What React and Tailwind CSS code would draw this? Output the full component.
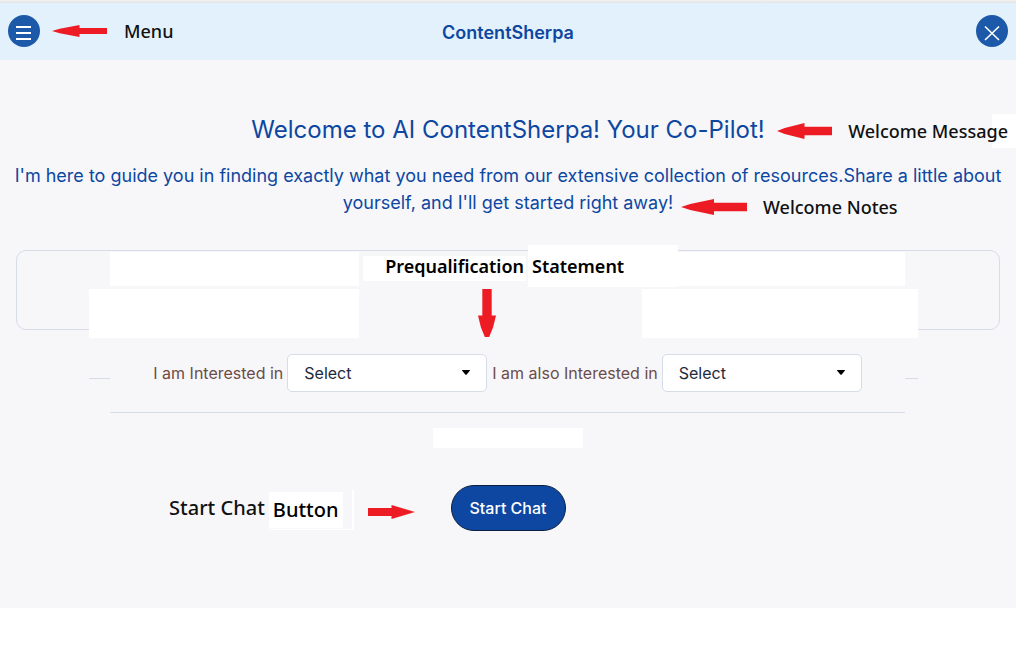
import React, { useState } from "react";

const topics = ["Articles", "Videos", "Webinars", "Case Studies"];

function Arrow({ className, points }) {
  return (
    <svg
      className={className}
      viewBox="0 0 100 100"
      preserveAspectRatio="none"
      fill="#ed1c24"
      aria-hidden="true"
    >
      <polygon points={points} />
    </svg>
  );
}

const LEFT = "0,50 14,32 50,0 50,24 100,24 100,76 50,76 50,100 14,68";
const RIGHT = "100,50 50,0 50,22 0,22 0,78 50,78 50,100";
const DOWN = "24,0 76,0 76,54 100,54 84,78 62,98 38,98 16,78 0,54 24,54";

function TopicSelect({ id, label }) {
  const [value, setValue] = useState("");

  return (
    <div className="flex items-center gap-1">
      <label htmlFor={id} className="text-base text-[#6d4c47]">
        {label}
      </label>
      <div className="relative">
        <select
          id={id}
          value={value}
          onChange={(e) => setValue(e.target.value)}
          className="h-[38px] w-[200px] appearance-none rounded-[5px] border border-[#d6dce8] bg-white px-4 text-base text-[#1e293b]"
        >
          <option value="">Select</option>
          {topics.map((topic) => (
            <option key={topic}>{topic}</option>
          ))}
        </select>
        <svg
          className="pointer-events-none absolute top-4 right-[17px] h-[5px] w-2"
          viewBox="0 0 8 5"
          aria-hidden="true"
        >
          <path d="M0.5 0h7q.7 0 .3.7L4.7 4.5q-.7.7-1.4 0L.2.7Q-.2 0 .5 0z" />
        </svg>
      </div>
    </div>
  );
}

function Header() {
  return (
    <header className="grid h-[57px] grid-cols-[1fr_auto_1fr] items-center bg-[#e3f1fc] px-2 pb-px">
      <div className="flex items-center">
        <button
          aria-label="Open menu"
          className="flex size-8 items-center justify-center rounded-full bg-[#1c5aa9]"
        >
          <svg className="size-8" viewBox="0 0 32 32" stroke="#fff" strokeWidth="2">
            <path d="M8 12h15M8 18h15M8 24h15" />
          </svg>
        </button>
        <Arrow className="ml-3 h-3 w-[55px]" points={LEFT} />
        <span className="ml-[17px] font-['Noto_Sans',sans-serif] text-lg font-medium text-[#111]">
          Menu
        </span>
      </div>
      <h1 className="pt-1 text-lg font-semibold text-[#0d47a1]">
        ContentSherpa
      </h1>
      <button
        aria-label="Close"
        className="flex size-8 items-center justify-center justify-self-end rounded-full bg-[#1c5aa9]"
      >
        <svg className="size-8" viewBox="0 0 32 32" stroke="#fff" strokeWidth="1.6">
          <path d="M9 11.5l14 13.500M23 11.500l-14 13.500" />
        </svg>
      </button>
    </header>
  );
}

function Welcome() {
  return (
    <section className="text-center text-[#0d47a1]">
      <div className="relative">
        <h2 className="text-2xl leading-8">
          Welcome to AI ContentSherpa! Your Co-Pilot!
        </h2>
        <div className="absolute top-0 right-0 flex h-[34px] items-center bg-[linear-gradient(to_left,#fff_24px,transparent_24px)] pr-2">
          <Arrow className="h-4 w-[55px]" points={LEFT} />
          <span className="ml-4 font-['Noto_Sans',sans-serif] text-lg font-medium text-[#111]">
            Welcome Message
          </span>
        </div>
      </div>
      <div className="relative mt-4 px-3">
        <p className="text-lg leading-[27px]">
          I'm here to guide you in finding exactly what you need from our
          extensive collection of resources.Share a little about yourself, and
          I'll get started right away!
        </p>
        <div className="absolute -bottom-0.5 left-[681px] flex h-[22px] items-center">
          <Arrow className="h-4 w-[66px]" points={LEFT} />
          <span className="ml-4 font-['Noto_Sans',sans-serif] text-lg font-medium text-[#111]">
            Welcome Notes
          </span>
        </div>
      </div>
    </section>
  );
}

function Statement() {
  return (
    <section className="relative mx-4 mt-[34px] h-20 rounded-[10px] border border-[#d6dce8]">
      <div className="absolute top-[38px] right-[81px] left-[72px] h-[49px] bg-[#f7f7fa]" />
      <div className="absolute top-px left-[93px] h-[34px] w-[249px] bg-white" />
      <div className="absolute top-[38px] left-[72px] h-[49px] w-[270px] bg-white" />
      <div className="absolute top-px right-[94px] h-[34px] w-[228px] bg-white" />
      <div className="absolute top-[38px] right-[81px] h-[49px] w-[276px] bg-white" />
      <div className="absolute -top-1.5 left-[346px] flex items-center gap-0.5 font-['Noto_Sans',sans-serif] text-lg font-semibold text-black">
        <span className="mt-1 flex h-[25px] w-[163px] items-center justify-end bg-white pr-0.5 pb-1">
          Prequalification
        </span>
        <span className="flex h-[42px] w-[150px] items-center bg-white pl-1">
          Statement
        </span>
      </div>
      <Arrow
        className="absolute top-[38px] left-[461px] h-[49px] w-[18px]"
        points={DOWN}
      />
    </section>
  );
}

function App() {
  return (
    <div className="bg-white font-['Inter',sans-serif]">
      <div className="h-[3px] bg-gradient-to-b from-[#f1f1f1] to-[#e4e4e4]" />
      <Header />
      <main className="bg-[#f7f7fa] pt-[54px] pb-[77px]">
        <Welcome />
        <Statement />
        <section className="mt-6 flex pr-[98px] pl-[89px]">
          <div className="mt-6 w-[21px] border-t border-[#d6dce8]" />
          <div className="flex flex-1 justify-center gap-[5px] border-b border-[#d6dce8] pb-5 whitespace-nowrap">
            <TopicSelect id="interest" label="I am Interested in" />
            <TopicSelect id="second-interest" label="I am also Interested in" />
          </div>
          <div className="mt-6 w-[13px] border-t border-[#d6dce8]" />
        </section>
        <div className="mx-auto mt-[15px] h-5 w-[150px] bg-white" />
        <div className="mt-[37px] grid grid-cols-[1fr_auto_1fr] items-center">
          <div className="flex items-center justify-end pr-9">
            <span className="font-['Noto_Sans',sans-serif] text-xl font-medium text-[#111]">
              Start Chat
            </span>
            <span className="mt-1 ml-1 flex h-10 items-center border-r-2 border-b border-white pr-[9px] font-['Noto_Sans',sans-serif] text-xl font-medium text-black">
              <span className="bg-white px-1 py-1">Button</span>
            </span>
            <Arrow className="mt-2 ml-3.5 h-3.5 w-[47px]" points={RIGHT} />
          </div>
          <button className="h-[46px] w-[115px] rounded-full border border-[#0b1f3f] bg-[#0d47a1] text-base font-medium text-white">
            Start Chat
          </button>
        </div>
      </main>
    </div>
  );
}

export default App;
